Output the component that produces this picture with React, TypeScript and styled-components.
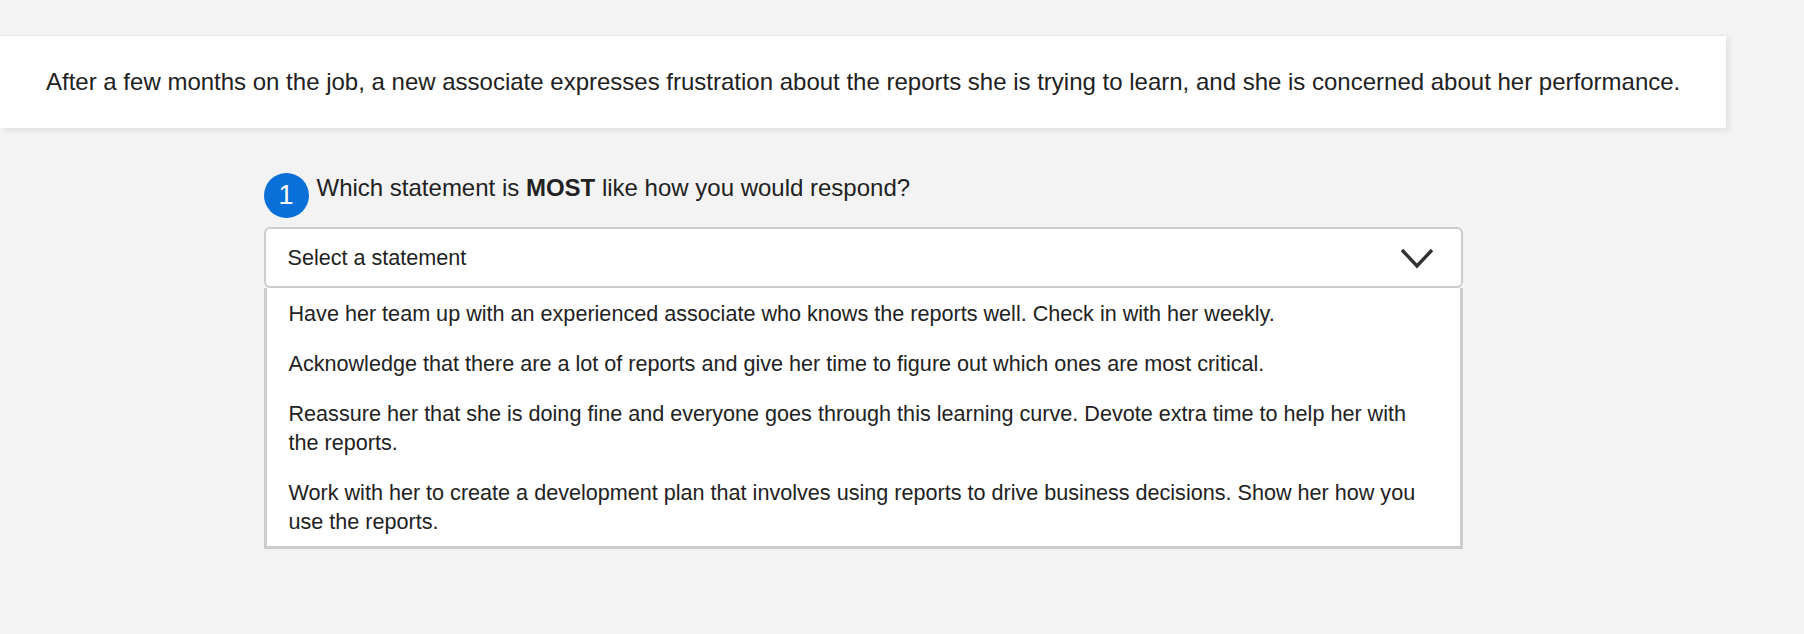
import React, { useState } from "react";
import styled, { createGlobalStyle } from "styled-components";

type Option = {
  label: string;
  value: number;
};

const OPTIONS: Option[] = [
  {
    value: 1,
    label:
      "Have her team up with an experienced associate who knows the reports well. Check in with her weekly.",
  },
  {
    value: 2,
    label:
      "Acknowledge that there are a lot of reports and give her time to figure out which ones are most critical.",
  },
  {
    value: 3,
    label:
      "Reassure her that she is doing fine and everyone goes through this learning curve. Devote extra time to help her with the reports.",
  },
  {
    value: 4,
    label:
      "Work with her to create a development plan that involves using reports to drive business decisions. Show her how you use the reports.",
  },
];

const GlobalStyle = createGlobalStyle`
  html, body {
    margin: 0;
    padding: 0;
    background: #f3f3f3;
    font-family: "Liberation Sans", Arial, sans-serif;
    color: #222;
  }
`;

const App = () => {
  const [isOpen, setIsOpen] = useState(true);
  const [selected, setSelected] = useState<Option | undefined>(undefined);

  return (
    <Page>
      <GlobalStyle />
      <Banner>
        <BannerText>
          After a few months on the job, a new associate expresses frustration
          about the reports she is trying to learn, and she is concerned about
          her performance.
        </BannerText>
      </Banner>

      <Question>
        <QuestionHeader>
          <StepBadge>1</StepBadge>
          <QuestionText>
            Which statement is <strong>MOST</strong> like how you would respond?
          </QuestionText>
        </QuestionHeader>

        <SelectWrap>
          <SelectBox onClick={() => setIsOpen((pre) => !pre)}>
            <SelectValue>
              {selected ? selected.label : "Select a statement"}
            </SelectValue>
            <Chevron width="34" height="21" viewBox="0 0 34 21">
              <polyline
                points="2,2 17,18 32,2"
                fill="none"
                stroke="#333"
                strokeWidth="3.4"
              />
            </Chevron>
          </SelectBox>

          <OptionList isOpen={isOpen}>
            {OPTIONS.map((option) => (
              <OptionItem
                key={option.value}
                onClick={() => {
                  setSelected(option);
                  setIsOpen(false);
                }}
              >
                {option.label}
              </OptionItem>
            ))}
          </OptionList>
        </SelectWrap>
      </Question>
    </Page>
  );
};

export default App;

const Page = styled.div`
  width: 1726px;
  padding-top: 35px;
  min-height: 634px;
  box-sizing: border-box;
`;

const Banner = styled.div`
  height: 93px;
  box-sizing: border-box;
  display: flex;
  align-items: center;
  padding: 0 16px 0 46px;
  background: #fff;
  border-top: 1px solid #e8e8e8;
  box-shadow: 3px 3px 5px rgba(0, 0, 0, 0.07);
`;

const BannerText = styled.p`
  margin: 0;
  font-size: 24px;
  line-height: 1.2;
  color: #222;
`;

const Question = styled.div`
  width: 1199px;
  margin: 45px auto 0;
`;

const QuestionHeader = styled.div`
  display: flex;
  align-items: flex-start;
  gap: 8px;
`;

const StepBadge = styled.span`
  flex: none;
  width: 45px;
  height: 45px;
  border-radius: 50%;
  background: #0a70d9;
  color: #fff;
  font-size: 27px;
  display: flex;
  align-items: center;
  justify-content: center;
`;

const QuestionText = styled.div`
  margin-top: 1px;
  font-size: 24px;
  line-height: 1.15;
  color: #222;

  strong {
    font-weight: 700;
  }
`;

const SelectWrap = styled.div`
  position: relative;
  margin-top: 9px;
`;

const SelectBox = styled.div`
  height: 61px;
  box-sizing: border-box;
  display: flex;
  align-items: center;
  justify-content: space-between;
  padding: 0 27px 0 22px;
  background: #fff;
  border: 2px solid #cccccc;
  border-radius: 6px;
  cursor: pointer;
`;

const SelectValue = styled.span`
  font-size: 21.6px;
  color: #222;
`;

const Chevron = styled.svg`
  display: block;
  margin-top: 1px;
`;

const OptionList = styled.ul<{ isOpen: boolean }>`
  display: ${({ isOpen }) => (isOpen ? "block" : "none")};
  position: absolute;
  top: 100%;
  left: 0;
  right: 0;
  margin: 0;
  padding: 0;
  list-style: none;
  background: #fff;
  border: 3px solid #cccccc;
  border-top: none;
  z-index: 10;
`;

const OptionItem = styled.li`
  padding: 10.5px 30px 10.5px 22px;
  font-size: 21.6px;
  line-height: 29px;
  color: #222;
  cursor: pointer;
`;
